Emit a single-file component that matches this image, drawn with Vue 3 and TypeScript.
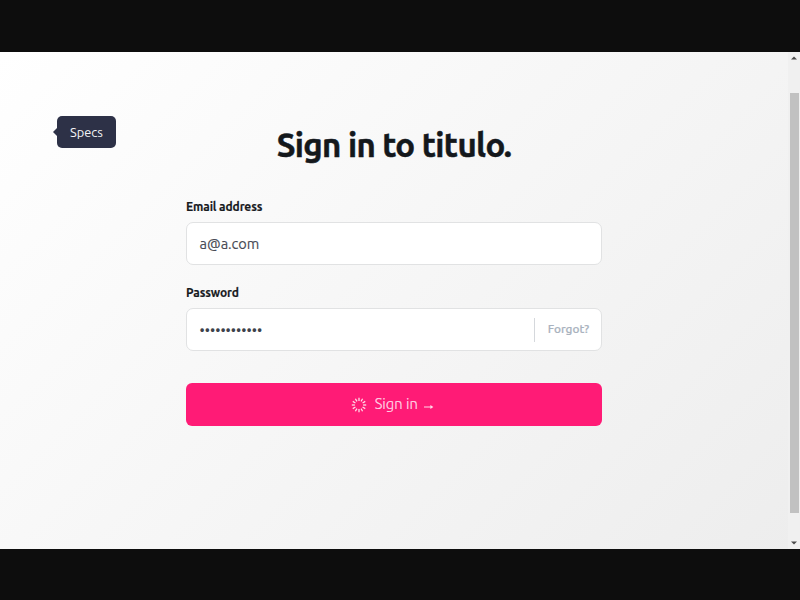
<script setup lang="ts">
import { ref } from 'vue'

const email = ref('a@a.com')
const maskedPassword = '•'.repeat(12)
const spokes = Array.from({ length: 12 }, (_, i) => i * 30)
</script>

<template>
  <div class="screen">
    <div class="viewport">
      <main class="page">
        <div class="tooltip"><span>Specs</span></div>
        <form class="form" @submit.prevent>
          <h1><span>Sign in to titulo.</span></h1>
          <label class="label email-label"><span>Email address</span></label>
          <div class="field"><span class="value">{{ email }}</span></div>
          <label class="label password-label"><span>Password</span></label>
          <div class="field">
            <span class="dots">{{ maskedPassword }}</span>
            <a class="forgot"><span>Forgot?</span></a>
          </div>
          <button class="submit" type="submit">
            <svg class="spinner" viewBox="0 0 16 16">
              <line
                v-for="angle in spokes"
                :key="angle"
                x1="8"
                y1="0.8"
                x2="8"
                y2="3.9"
                :transform="`rotate(${angle} 8 8)`"
              />
            </svg>
            <span class="submit-text">Sign in</span>
            <svg class="arrow" viewBox="0 0 12 8">
              <path class="shaft" d="M1 4H8.5" />
              <path class="head" d="M7.4 1.9L10.4 4L7.4 6.1Z" />
            </svg>
          </button>
        </form>
      </main>
      <aside class="scrollbar">
        <svg class="caret" viewBox="0 0 8 4"><path d="M4 0.5L7 3.5H1Z" /></svg>
        <div class="thumb"></div>
        <svg class="caret" viewBox="0 0 8 4"><path d="M1 0.5H7L4 3.5Z" /></svg>
      </aside>
    </div>
  </div>
</template>

<style>
body {
  margin: 0;
  background: #0d0d0d;
  overflow: hidden;
}
</style>

<style scoped>
.screen {
  box-sizing: border-box;
  width: 800px;
  height: 600px;
  padding: 52px 0 51px;
  background: #0d0d0d;
  font-family: Ubuntu, 'Noto Sans', 'Open Sans', sans-serif;
}
.viewport {
  display: flex;
  height: 497px;
  background: linear-gradient(135deg, #ffffff 0%, #ededed 100%);
}
.page {
  position: relative;
  display: flex;
  flex: 1;
  justify-content: center;
}
.tooltip {
  position: absolute;
  left: 57px;
  top: 64px;
  box-sizing: border-box;
  width: 59px;
  height: 32px;
  border-radius: 5px;
  background: #2d3147;
  color: #f4f4f6;
  font-size: 12.8px;
  line-height: 32px;
  text-align: center;
}
.tooltip::before {
  content: '';
  position: absolute;
  left: -4px;
  top: 11px;
  border: 5px solid transparent;
  border-left-width: 0;
  border-right-color: #2d3147;
}
.form {
  display: flex;
  flex-direction: column;
  width: 416px;
}
h1 {
  margin: 70px 0 0;
  height: 46px;
  color: #14181c;
  font-size: 33px;
  font-weight: 700;
  line-height: 46px;
  letter-spacing: -0.65px;
  text-align: center;
  white-space: nowrap;
  -webkit-text-stroke: 0.5px #14181c;
}
.label {
  height: 16px;
  color: #181b1f;
  font-size: 12px;
  font-weight: 700;
  line-height: 16px;
  letter-spacing: -0.12px;
  -webkit-text-stroke: 0.15px #181b1f;
}
.email-label {
  margin: 31px 0 7px;
}
.password-label {
  margin: 20px 0 7px;
}
.field {
  display: flex;
  box-sizing: border-box;
  align-items: center;
  justify-content: space-between;
  width: 416px;
  height: 43px;
  padding: 0 12px 0 12.5px;
  border: 1px solid #e1e2e3;
  border-radius: 7px;
  background: #fff;
  color: #484b55;
}
.value {
  font-size: 14.5px;
  line-height: 20px;
  -webkit-text-stroke: 0.15px #484b55;
}
.dots {
  color: #3d424b;
  font-size: 14.5px;
  line-height: 20px;
}
.forgot {
  display: flex;
  align-items: center;
  height: 24px;
  padding-left: 13px;
  border-left: 1px solid #d5d8dc;
  color: #a9b2be;
  font-size: 11.8px;
  font-weight: 500;
  -webkit-text-stroke: 0.2px #a9b2be;
}
.forgot span {
  margin-top: -2px;
}
.submit {
  display: flex;
  align-items: center;
  justify-content: center;
  width: 416px;
  height: 43px;
  margin: 32px 0 0;
  padding: 0 2px 0 0;
  border: 0;
  border-radius: 6px;
  background: #ff1b76;
  color: #ffdae8;
  font-family: inherit;
  font-size: 14.8px;
  font-weight: 300;
}
.spinner {
  width: 16px;
  height: 16px;
  margin-right: 7.5px;
}
.spinner line {
  stroke: #ffdce9;
  stroke-width: 1.3;
}
.submit-text {
  margin-top: -1px;
  line-height: 20px;
  -webkit-text-stroke: 0.2px #ffdae8;
}
.arrow {
  width: 12px;
  height: 8px;
  margin: 5px 0 0 5px;
}
.shaft {
  fill: none;
  stroke: #ffdae8;
}
.head {
  fill: #ffdae8;
}
.scrollbar {
  display: flex;
  flex-direction: column;
  align-items: center;
  justify-content: space-between;
  box-sizing: border-box;
  width: 12px;
  padding: 4px 0 4px;
  background: #f0f0f0;
}
.caret {
  width: 8px;
  height: 4px;
  fill: #4a4a4a;
}
.thumb {
  width: 9px;
  height: 420px;
  margin-bottom: -5px;
  background: #c1c1c1;
}
</style>
